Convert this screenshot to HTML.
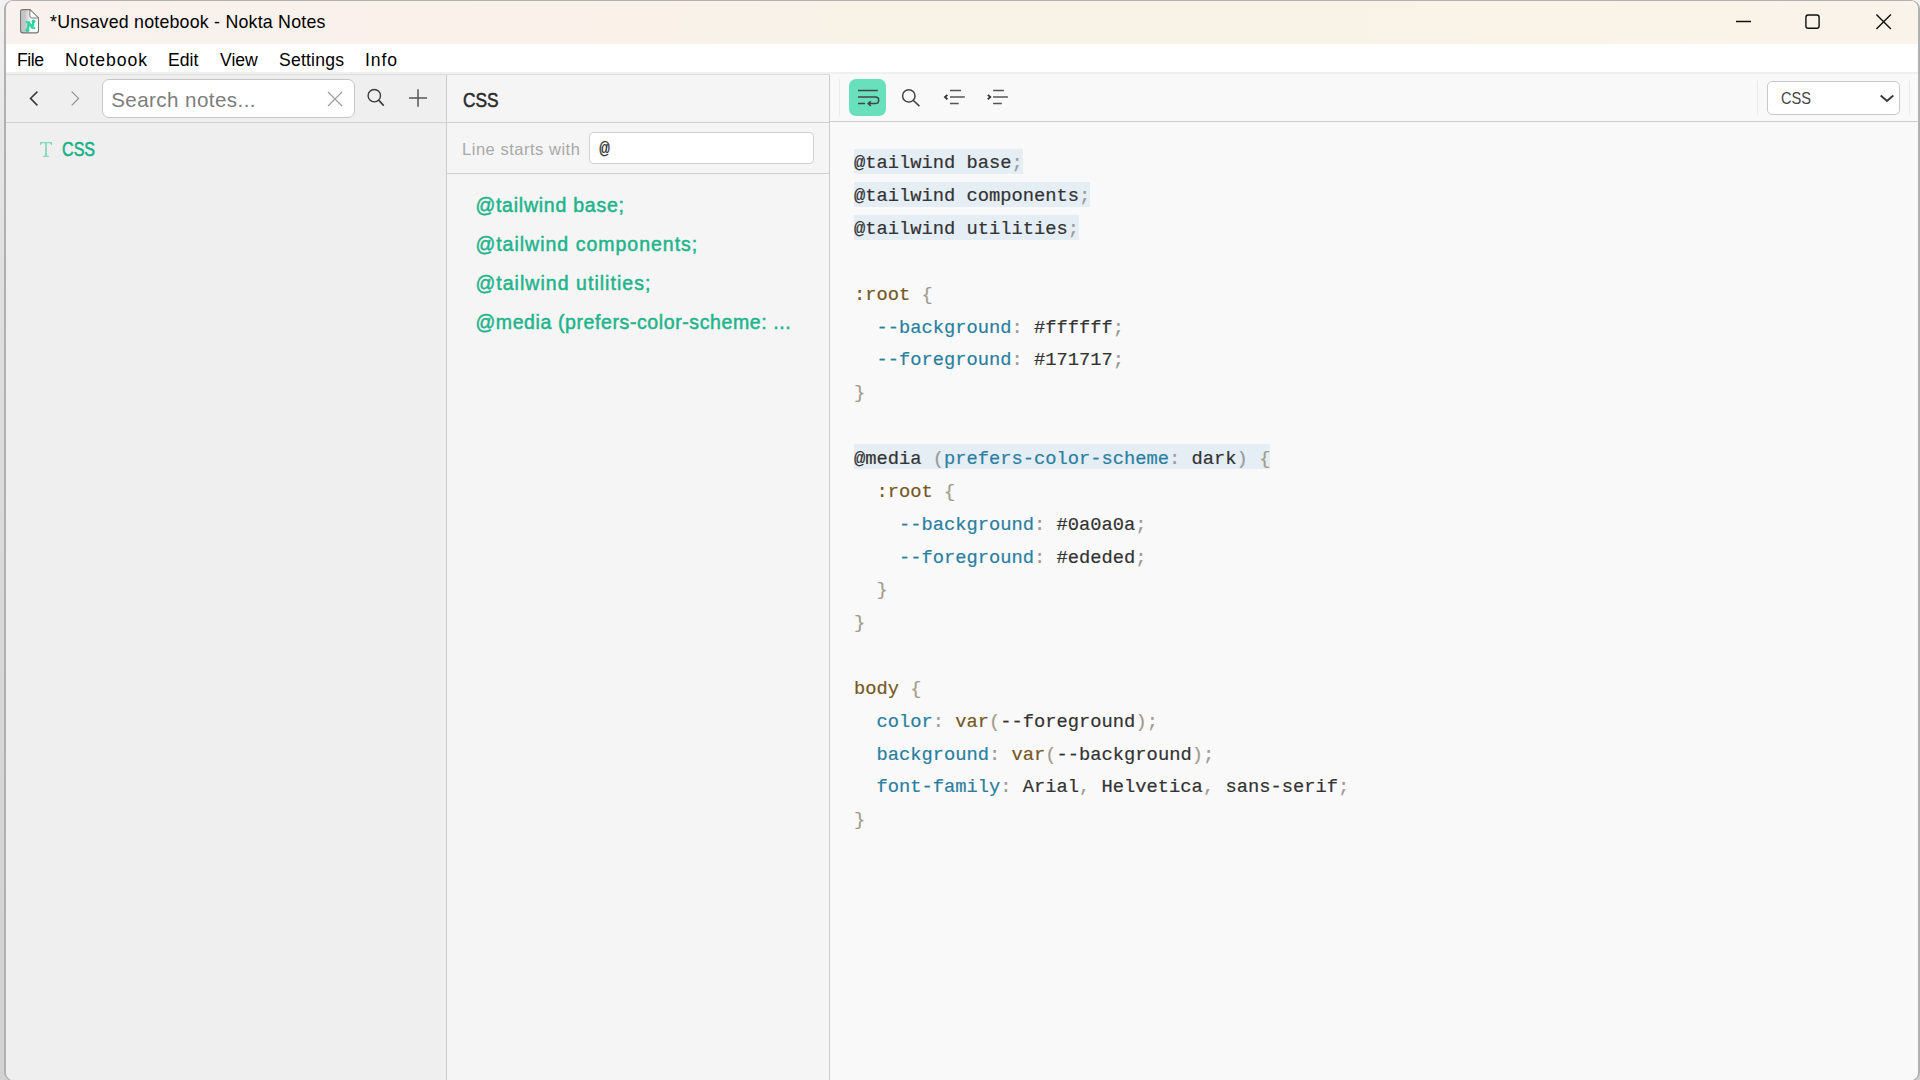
<!DOCTYPE html>
<html>
<head>
<meta charset="utf-8">
<title>Nokta Notes</title>
<style>
*{box-sizing:border-box;margin:0;padding:0}
html,body{width:1920px;height:1080px;overflow:hidden}
body{font-family:"Liberation Sans",sans-serif;background:linear-gradient(to bottom,#f2f2f2 0,#e6e6e6 12%,#dfdfdf 27%,#d8d8d8 60%,#d2d2d2 100%);position:relative}
.abs{position:absolute}
#win{position:absolute;left:4px;top:0;width:1916px;height:1081px;border:solid #b0b0b0;border-width:1px 2px 1px 2px;border-radius:9px;overflow:hidden;background:#f9f9f9}
#title{position:absolute;left:0;top:0;width:1912px;height:43px;background:linear-gradient(to right,#f9f1ed 0,#f9f2e8 40%,#f9f2e6 55%,#f9f3e9 100%)}
#title .t{position:absolute;left:44px;top:8.5px;font-size:17.8px;letter-spacing:0.22px;line-height:24px;color:#000;white-space:nowrap}
#menu{position:absolute;left:0;top:43px;width:1912px;height:28px;background:#fff}
#menu span{position:absolute;top:4px;font-size:17.6px;line-height:24px;color:#000;white-space:nowrap}
#sep{position:absolute;left:0;top:71px;width:1912px;height:2px;background:#f0f0f0}
#sep2{position:absolute;left:0;top:73px;width:824px;height:1px;background:#dcdcdc}
/* left panel */
#left{position:absolute;left:0;top:74px;width:440px;height:1010px;background:#efefef}
#left .bar{position:absolute;left:0;top:0;width:440px;height:48px;border-bottom:1px solid #d2d2d2}
#search{position:absolute;left:96px;top:4px;width:253px;height:39px;border:1px solid #c6c6c6;border-radius:7px;background:#fff}
#search .ph{position:absolute;left:8.2px;top:7px;font-size:20.6px;letter-spacing:0.42px;line-height:26px;color:#7d7d7d;white-space:nowrap}
/* middle panel */
#mid{position:absolute;left:440px;top:74px;width:384px;height:1010px;background:#f5f5f5;border-left:1px solid #cbcbcb;border-right:1px solid #cbcbcb}
#mid .hd{position:absolute;left:0;top:0;width:382px;height:48px;border-bottom:1px solid #d0d0d0}
#mid .hd b{position:absolute;left:15.6px;top:11.6px;font-size:20.6px;line-height:26px;font-weight:400;color:#2b2b2b;-webkit-text-stroke:0.55px #2b2b2b;transform:scaleX(0.84);transform-origin:0 0}
#mid .flt{position:absolute;left:0;top:48px;width:382px;height:51px;border-bottom:1px solid #d0d0d0}
#mid .flt .lb{position:absolute;left:15px;top:15px;font-size:16.5px;letter-spacing:0.52px;line-height:22px;color:#a9a9a9;white-space:nowrap}
#mid .flt .in{position:absolute;left:142px;top:9px;width:225px;height:32px;border:1px solid #cfcfcf;border-radius:4px;background:#fff}
#mid .flt .in i{position:absolute;left:9.3px;top:5px;font-style:normal;font-family:"Liberation Mono",monospace;font-size:17.6px;line-height:22px;color:#333;-webkit-text-stroke:0.2px}
#mid .it{position:absolute;left:28.4px;font-size:19.5px;line-height:26px;font-weight:400;color:#1fb48b;-webkit-text-stroke:0.5px #1fb48b;letter-spacing:0.55px;white-space:nowrap}
/* right panel */
#right{position:absolute;left:824px;top:73px;width:1088px;height:1010px;background:#f9f9f9}
#right .bar{position:absolute;left:0;top:0;width:1088px;height:48px;border-bottom:1px solid #cecece;background:#f9f9f9}
#wrapbtn{position:absolute;left:19px;top:5px;width:37px;height:37px;border-radius:7px;background:#68e0bc}
#sel{position:absolute;left:937px;top:7px;width:133px;height:34px;border:1px solid #c8c8c8;border-radius:5px;background:#fff}
#sel span{position:absolute;left:12.6px;top:5px;font-size:17px;line-height:24px;color:#444;transform:scaleX(0.86);transform-origin:0 0}
#code{position:absolute;left:24px;top:73.4px;font-family:"Liberation Mono",monospace;font-size:18.75px;line-height:32.85px;color:#333;-webkit-text-stroke:0.2px;white-space:pre}
#code .l{display:block;height:32.85px}
.hl{background:#e5edf5;padding:3.3px 0 0 0}
.hl2{background:linear-gradient(#e5edf5,#e5edf5) no-repeat 0 0 / 100% 25px;padding:4.3px 0 0 0}
.p{color:#9a9a9a}
.k{color:#2a7f9f}
.s{color:#76581f}
.b{color:#a39b8c}
</style>
</head>
<body>
<div id="win">
  <div id="title">
    <svg class="abs" style="left:13px;top:7px" width="24" height="28" viewBox="0 0 24 28">
      <defs><linearGradient id="dg" x1="0" x2="1" y1="0" y2="0"><stop offset="0" stop-color="#c9c9c9"/><stop offset="0.22" stop-color="#c4c4c4"/><stop offset="0.5" stop-color="#ececec"/><stop offset="0.62" stop-color="#ffffff"/><stop offset="1" stop-color="#ffffff"/></linearGradient></defs>
      <path d="M3.6 1.6 H10.9 L19.5 10 V22.6 Q19.5 24.9 17.2 24.9 H3.9 Q1.6 24.9 1.6 22.6 V3.6 Q1.6 1.6 3.6 1.6 Z" fill="url(#dg)" stroke="#747474" stroke-width="1.1"/>
      <path d="M10.9 1.6 V8 Q10.9 10 12.9 10 H19.5 Z" fill="#ffffff" stroke="#7a7a7a" stroke-width="1" stroke-linejoin="round"/>
      <g transform="translate(-0.9,0.6)"><g fill="none" stroke="#2dd5a2" stroke-width="2.3" stroke-linecap="round" stroke-linejoin="round"><path d="M9.6 21.4 L10.6 13.6 L14.2 19.2 L15.2 13"/></g>
      <circle cx="9.2" cy="21.6" r="1.9" fill="#2dd5a2"/><circle cx="15.4" cy="12.8" r="1.9" fill="#2dd5a2"/><circle cx="8.6" cy="13.5" r="1.2" fill="#2dd5a2"/><circle cx="16" cy="19.5" r="1.2" fill="#2dd5a2"/></g>
    </svg>
    <div class="t">*Unsaved notebook - Nokta Notes</div>
    <svg class="abs" style="left:1720px;top:-1px" width="192" height="43" viewBox="0 0 192 43">
      <g fill="none" stroke="#111" stroke-width="1.4">
        <path d="M10 21.5 H25"/>
        <rect x="79.9" y="15" width="13.2" height="13.2" rx="2.2"/>
        <path d="M150.4 14.6 L164.9 29.1 M164.9 14.6 L150.4 29.1"/>
      </g>
    </svg>
  </div>
  <div id="menu">
    <span style="left:11px;letter-spacing:-0.4px">File</span><span style="left:59px;letter-spacing:0.95px">Notebook</span><span style="left:162px">Edit</span><span style="left:214px">View</span><span style="left:273px;letter-spacing:0.2px">Settings</span><span style="left:359px;letter-spacing:0.9px">Info</span>
  </div>
  <div id="sep"></div><div id="sep2"></div>
  <div id="left">
    <div class="bar">
      <svg class="abs" style="left:0;top:-1px" width="440" height="47" viewBox="0 0 440 47">
        <g fill="none">
          <path d="M31.4 17.6 L24.5 24.4 L31.4 31.4" stroke="#383838" stroke-width="1.5"/>
          <path d="M65.7 17.6 L72.6 24.4 L65.7 31.4" stroke="#8c8c8c" stroke-width="1.1"/>
          <circle cx="368.3" cy="21.7" r="6.2" stroke="#3a3a3a" stroke-width="1.4"/>
          <path d="M372.9 26.4 L377.7 31.6" stroke="#3a3a3a" stroke-width="1.6"/>
          <path d="M403 24.1 H421 M412 15.3 V32.8" stroke="#555" stroke-width="1.5"/>
        </g>
      </svg>
      <div id="search"><div class="ph">Search notes...</div>
        <svg class="abs" style="left:223.15px;top:9.9px" width="18" height="18" viewBox="0 0 18 18"><path d="M2 2 L16 16 M16 2 L2 16" stroke="#9a9a9a" stroke-width="1.1" fill="none"/></svg>
      </div>
    </div>
    <svg class="abs" style="left:33px;top:66px" width="14" height="17" viewBox="0 0 14 17"><path d="M1 1 H13 V4 H12.2 Q12 2.2 10.4 2.2 H7.9 V13.6 Q7.9 14.9 9.8 15.1 V16 H4.2 V15.1 Q6.1 14.9 6.1 13.6 V2.2 H3.6 Q2 2.2 1.8 4 H1 Z" fill="#86d9bf"/></svg>
    <div class="abs" style="left:56px;top:62.1px;font-size:19.3px;line-height:26px;font-weight:400;color:#15b185;-webkit-text-stroke:0.55px #15b185;transform:scaleX(0.835);transform-origin:0 0">CSS</div>
  </div>
  <div id="mid">
    <div class="hd"><b>CSS</b></div>
    <div class="flt"><div class="lb">Line starts with</div><div class="in"><i>@</i></div></div>
    <div class="it" style="top:117px;letter-spacing:0.76px">@tailwind base;</div>
    <div class="it" style="top:156px;letter-spacing:1px">@tailwind components;</div>
    <div class="it" style="top:195px;letter-spacing:1.04px">@tailwind utilities;</div>
    <div class="it" style="top:234px;letter-spacing:0.6px">@media (prefers-color-scheme: ...</div>
  </div>
  <div id="right">
    <div class="bar">
      <div class="abs" style="left:9px;top:5px;width:1px;height:37px;background:#ececec"></div>
      <div id="wrapbtn"></div>
      <svg class="abs" style="left:0;top:0" width="260" height="47" viewBox="0 0 260 47">
        <g fill="none" stroke="#444" stroke-width="1.5" stroke-linecap="butt">
          <path d="M28 16.6 H47.8"/>
          <path d="M28 23 H45.4 A3.3 3.3 0 0 1 45.4 29.6 H38.6"/>
          <path d="M28 29.6 H35"/>
          <path d="M40.8 27.3 L38.3 29.6 L40.8 31.9" stroke-width="1.7"/>
        </g>
        <g fill="none" stroke="#444">
          <circle cx="78.8" cy="21.9" r="6.2" stroke-width="1.5"/>
          <path d="M83.4 26.5 L89.4 32.2" stroke-width="1.6"/>
        </g>
        <g fill="none" stroke="#555" stroke-width="1.5">
          <path d="M120 16.6 H131 M120 23 H134.8 M120 29.6 H128.7"/>
          <path d="M163.1 16.6 H173.9 M163.1 23 H177.9 M163.1 29.6 H171.8"/>
        </g>
        <g fill="none" stroke="#333" stroke-width="1.8">
          <path d="M117.4 20.9 L115 23 L117.4 25.3"/>
          <path d="M157.8 20.9 L160.3 23 L157.8 25.3"/>
        </g>
      </svg>
      <div class="abs" style="left:927px;top:7px;width:1px;height:34px;background:#ececec"></div>
      <div class="abs" style="left:1079px;top:7px;width:1px;height:34px;background:#ececec"></div>
      <div id="sel"><span>CSS</span>
        <svg class="abs" style="left:110px;top:11px" width="18" height="12" viewBox="0 0 18 12"><path d="M2.7 2.4 L9 8 L15.3 2.4" stroke="#3c3c3c" stroke-width="2" fill="none"/></svg>
      </div>
    </div>
<div id="code"><span class="l"><span class="hl">@tailwind base<span class="p">;</span></span></span><span class="l"><span class="hl">@tailwind components<span class="p">;</span></span></span><span class="l"><span class="hl">@tailwind utilities<span class="p">;</span></span></span><span class="l"> </span><span class="l"><span class="s">:root</span> <span class="b">{</span></span><span class="l">  <span class="k">--background</span><span class="p">:</span> #ffffff<span class="p">;</span></span><span class="l">  <span class="k">--foreground</span><span class="p">:</span> #171717<span class="p">;</span></span><span class="l"><span class="b">}</span></span><span class="l"> </span><span class="l"><span class="hl2">@media <span class="p">(</span><span class="k">prefers-color-scheme</span><span class="p">:</span> dark<span class="p">)</span> <span class="b">{</span></span></span><span class="l">  <span class="s">:root</span> <span class="b">{</span></span><span class="l">    <span class="k">--background</span><span class="p">:</span> #0a0a0a<span class="p">;</span></span><span class="l">    <span class="k">--foreground</span><span class="p">:</span> #ededed<span class="p">;</span></span><span class="l">  <span class="b">}</span></span><span class="l"><span class="b">}</span></span><span class="l"> </span><span class="l"><span class="s">body</span> <span class="b">{</span></span><span class="l">  <span class="k">color</span><span class="p">:</span> <span class="s">var</span><span class="b">(</span>--foreground<span class="b">)</span><span class="p">;</span></span><span class="l">  <span class="k">background</span><span class="p">:</span> <span class="s">var</span><span class="b">(</span>--background<span class="b">)</span><span class="p">;</span></span><span class="l">  <span class="k">font-family</span><span class="p">:</span> Arial<span class="b">,</span> Helvetica<span class="b">,</span> sans-serif<span class="p">;</span></span><span class="l"><span class="b">}</span></span></div>
  </div>
</div>
</body>
</html>
